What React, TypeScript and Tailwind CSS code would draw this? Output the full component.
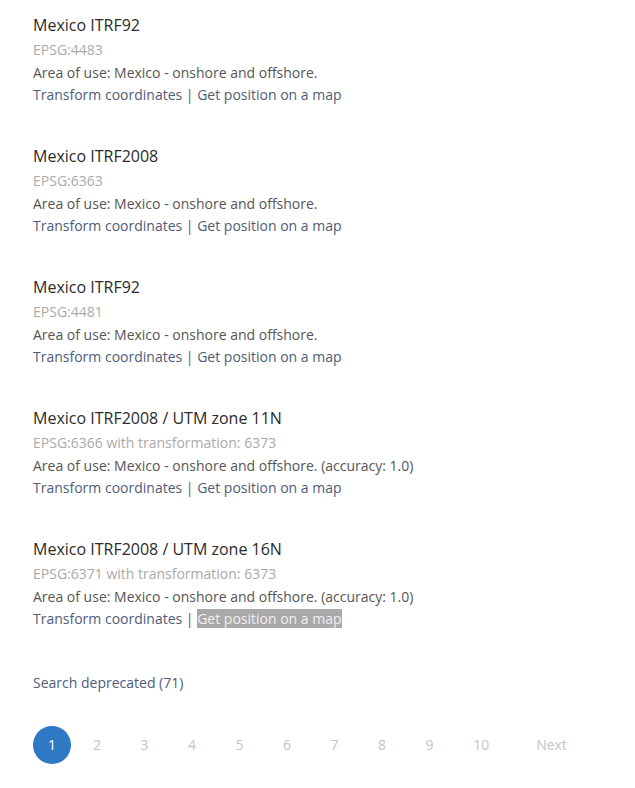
import React from "react";

const items = [
  { title: "Mexico ITRF92", code: "EPSG:4483", area: "Area of use: Mexico - onshore and offshore." },
  { title: "Mexico ITRF2008", code: "EPSG:6363", area: "Area of use: Mexico - onshore and offshore." },
  { title: "Mexico ITRF92", code: "EPSG:4481", area: "Area of use: Mexico - onshore and offshore." },
  {
    title: "Mexico ITRF2008 / UTM zone 11N",
    code: "EPSG:6366 with transformation: 6373",
    area: "Area of use: Mexico - onshore and offshore. (accuracy: 1.0)",
  },
  {
    title: "Mexico ITRF2008 / UTM zone 16N",
    code: "EPSG:6371 with transformation: 6373",
    area: "Area of use: Mexico - onshore and offshore. (accuracy: 1.0)",
    selected: true,
  },
];

export default function App() {
  return (
    <div
      className="w-[635px] min-h-[788px] bg-white pl-[33px] pt-[12px]"
      style={{ fontFamily: '"Open Sans", sans-serif' }}
    >
      <div className="flex flex-col gap-[36.5px]">
        {items.map((it, i) => (
          <div key={i} className="flex flex-col">
            <div className="text-[16px] leading-[27px] text-[#2b2b2b]">{it.title}</div>
            <div className="text-[14px] leading-[22.5px] text-[#aaaaaa]">{it.code}</div>
            <div className="text-[14px] leading-[22.5px] text-[#555555]">{it.area}</div>
            <div className="text-[14px] leading-[22.5px] text-[#4f5b78] whitespace-pre">
              <span>Transform coordinates</span>
              <span> | </span>
              {it.selected ? (
                <span className="bg-[#a9a9a9] text-[#f0f0f0]">Get position on a map</span>
              ) : (
                <span>Get position on a map</span>
              )}
            </div>
          </div>
        ))}
      </div>
      <div className="mt-[41px] text-[14px] leading-[22px] text-[#4f5b78]">Search deprecated (71)</div>
      <div className="mt-[32px] flex items-center text-[14px]">
        <div className="w-[38px] h-[38px] rounded-full bg-[#2f78c4] text-white flex items-center justify-center">
          1
        </div>
        {["2", "3", "4", "5", "6", "7", "8", "9", "10"].map((n) => (
          <div key={n} className="ml-[4.5px] px-[17.5px] h-[38px] flex items-center justify-center text-[#c4c4c4]">
            {n}
          </div>
        ))}
        <div className="ml-[12px] px-[17.5px] h-[38px] flex items-center justify-center text-[#c4c4c4]">Next</div>
      </div>
    </div>
  );
}
